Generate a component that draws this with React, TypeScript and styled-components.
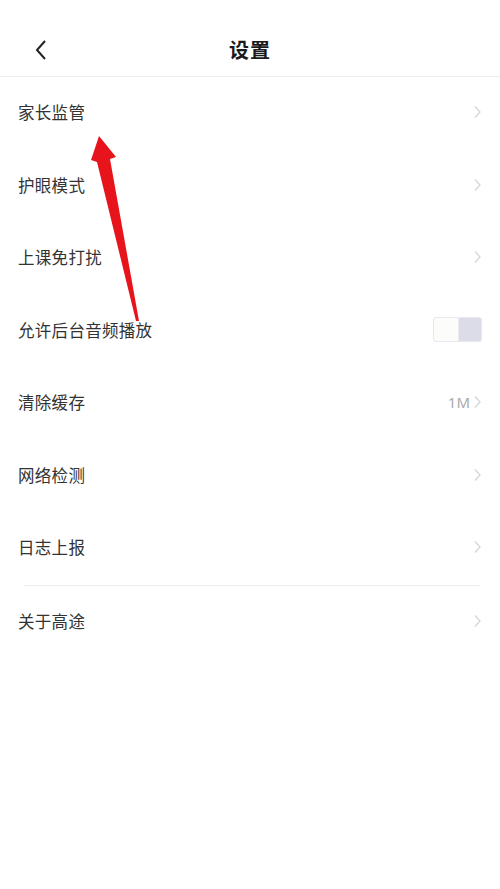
import React, { useState } from 'react';
import styled, { createGlobalStyle } from 'styled-components';

const GlobalStyle = createGlobalStyle`
  html, body {
    margin: 0;
    padding: 0;
    background: #ffffff;
  }
  body {
    font-family: "Noto Sans CJK SC", "Noto Sans", sans-serif;
    -webkit-font-smoothing: antialiased;
  }
`;

const Page = styled.div`
  position: relative;
  width: 500px;
  min-height: 889px;
  background: #fff;
  overflow: hidden;
`;

const Header = styled.header`
  height: 77px;
  padding-top: 23px;
  box-sizing: border-box;
  display: flex;
  align-items: center;
  border-bottom: 1px solid #efefef;
`;

const HeaderInner = styled.div`
  flex: 1;
  height: 53px;
  display: grid;
  grid-template-columns: 80px 1fr 80px;
  align-items: center;
`;

const BackButton = styled.button`
  border: none;
  background: none;
  padding: 0 0 0 34px;
  display: flex;
  align-items: center;
  cursor: pointer;
`;

const Title = styled.h1`
  margin: 0;
  text-align: center;
  font-size: 20px;
  font-weight: 700;
  color: #1a1a1a;
  letter-spacing: 1px;
`;

const List = styled.div`
  display: flex;
  flex-direction: column;
`;

const Row = styled.div`
  height: 72.5px;
  display: flex;
  align-items: center;
  justify-content: space-between;
  padding: 0 18px 2px;
  box-sizing: border-box;
`;

const Label = styled.span`
  font-size: 16.5px;
  color: #333;
  letter-spacing: 0.3px;
`;

const Trail = styled.div`
  display: flex;
  align-items: center;
  gap: 3px;
`;

const Value = styled.span`
  font-size: 15px;
  color: #acacac;
  font-family: "Noto Sans", "Noto Sans CJK SC", sans-serif;
`;

const Divider = styled.div`
  height: 1px;
  margin: 0 20px 0 24px;
  background: #ededed;
`;

const Toggle = styled.button<{ $on: boolean }>`
  width: 49px;
  height: 25px;
  padding: 0;
  border: 1px solid #e8e8ee;
  border-radius: 3px;
  display: flex;
  justify-content: ${p => (p.$on ? 'flex-end' : 'flex-start')};
  background: #dcdce8;
  cursor: pointer;
  overflow: hidden;
`;

const Knob = styled.span`
  width: 24px;
  height: 100%;
  background: #fcfcfa;
  border-right: 1px solid #ececf0;
`;

const Annotation = styled.svg`
  position: absolute;
  left: 0;
  top: 0;
  pointer-events: none;
`;

function Chevron() {
  return (
    <svg width="9" height="14" viewBox="0 0 9 14">
      <path d="M2 1.5 L7 7 L2 12.5" fill="none" stroke="#d6d6d6" strokeWidth="1.3" />
    </svg>
  );
}

interface Item {
  label: string;
  value?: string;
  toggle?: boolean;
}

const items: Item[] = [
  { label: '家长监管' },
  { label: '护眼模式' },
  { label: '上课免打扰' },
  { label: '允许后台音频播放', toggle: true },
  { label: '清除缓存', value: '1M' },
  { label: '网络检测' },
  { label: '日志上报' },
];

export default function App() {
  const [audio, setAudio] = useState<boolean>(false);

  return (
    <Page>
      <GlobalStyle />
      <Header>
        <HeaderInner>
          <BackButton aria-label="back">
            <svg width="14" height="22" viewBox="0 0 14 22">
              <path d="M11 2 L3 11 L11 20" fill="none" stroke="#222" strokeWidth="2" />
            </svg>
          </BackButton>
          <Title>设置</Title>
          <span />
        </HeaderInner>
      </Header>
      <List>
        {items.map(item => (
          <Row key={item.label}>
            <Label>{item.label}</Label>
            {item.toggle ? (
              <Toggle $on={audio} onClick={() => setAudio(!audio)}>
                <Knob />
              </Toggle>
            ) : (
              <Trail>
                {item.value && <Value>{item.value}</Value>}
                <Chevron />
              </Trail>
            )}
          </Row>
        ))}
        <Divider />
        <Row>
          <Label>关于高途</Label>
          <Trail>
            <Chevron />
          </Trail>
        </Row>
      </List>
      <Annotation width="500" height="889" viewBox="0 0 500 889">
        <polygon
          points="99,136 116,157 110,159 139,321 136,321 97,162 91,160"
          fill="#e8141b"
        />
      </Annotation>
    </Page>
  );
}
